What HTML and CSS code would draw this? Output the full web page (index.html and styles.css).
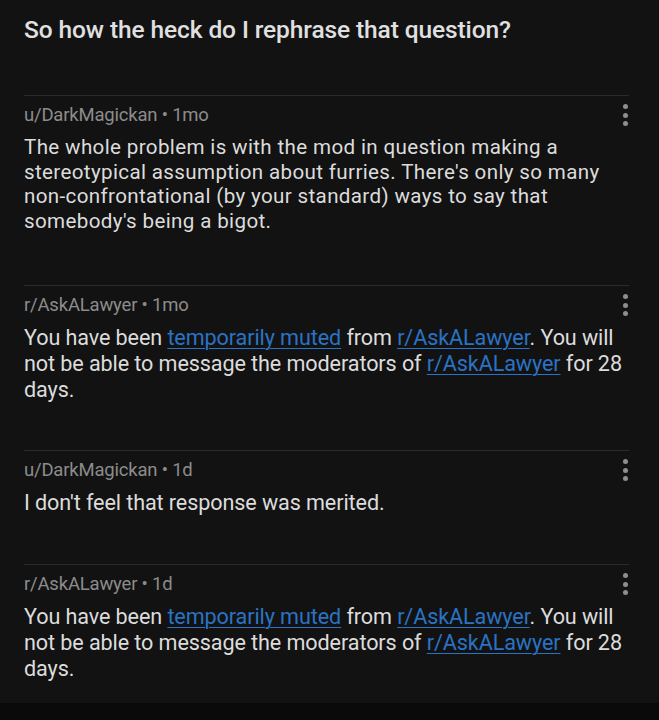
FILE: index.html
```html
<!DOCTYPE html>
<html>
<head>
<meta charset="utf-8">
<link rel="stylesheet" href="styles.css">
</head>
<body>
<div class="page">
  <h1 class="title">So how the heck do I rephrase that question?</h1>
  <div class="comment c1">
    <div class="meta"><span>u/DarkMagickan • 1mo</span><span class="dots"><i></i><i></i><i></i></span></div>
    <p class="body wide">The whole problem is with the mod in question making a stereotypical assumption about furries. There's only so many non&#8209;confrontational (by your standard) ways to say that somebody's being a bigot.</p>
  </div>
  <div class="comment c2">
    <div class="meta"><span>r/AskALawyer • 1mo</span><span class="dots"><i></i><i></i><i></i></span></div>
    <p class="body">You have been <a href="#">temporarily muted</a> from <a href="#">r/AskALawyer</a>. You will not be able to message the moderators of <a href="#">r/AskALawyer</a> for 28 days.</p>
  </div>
  <div class="comment c3">
    <div class="meta"><span>u/DarkMagickan • 1d</span><span class="dots"><i></i><i></i><i></i></span></div>
    <p class="body">I don't feel that response was merited.</p>
  </div>
  <div class="comment c4">
    <div class="meta"><span>r/AskALawyer • 1d</span><span class="dots"><i></i><i></i><i></i></span></div>
    <p class="body">You have been <a href="#">temporarily muted</a> from <a href="#">r/AskALawyer</a>. You will not be able to message the moderators of <a href="#">r/AskALawyer</a> for 28 days.</p>
  </div>
</div>
<div class="navbar"></div>
</body>
</html>
```
FILE: styles.css
```css
html, body {
  margin: 0;
  padding: 0;
  background: #121212;
  height: 720px;
  overflow: hidden;
}
body {
  font-family: Roboto, "Noto Sans", sans-serif;
  color: #d7d7d7;
  display: flex;
  flex-direction: column;
}
.page {
  flex: 1;
  padding: 0 30px 0 24px;
}
.title {
  margin: 0;
  padding-top: 15px;
  height: 95px;
  box-sizing: border-box;
  font-size: 24.5px;
  font-weight: 500;
  line-height: 30px;
  color: #e0e0e0;
  letter-spacing: -0.1px;
}
.comment {
  border-top: 1px solid #2b2b2b;
  padding-top: 7px;
  box-sizing: border-box;
}
.meta {
  display: flex;
  justify-content: space-between;
  align-items: flex-start;
  font-size: 18.5px;
  line-height: 24px;
  color: #8c8c8c;
  letter-spacing: -0.2px;
}
.dots {
  display: flex;
  flex-direction: column;
  gap: 3.5px;
  padding-top: 1px;
  margin-right: 1px;
}
.dots i {
  display: block;
  width: 5px;
  height: 5px;
  border-radius: 50%;
  background: #8e8e8e;
}
.body {
  margin: 8px 0 0;
  font-size: 21.6px;
  line-height: 26px;
  color: #dcdcdc;
  letter-spacing: -0.1px;
}
.body.wide {
  font-size: 20.6px;
  line-height: 24.5px;
  letter-spacing: 0.35px;
}
.body a {
  color: #2a73c4;
  text-decoration: underline;
  text-decoration-thickness: 1px;
  text-underline-offset: 3px;
}
.c1 { height: 190px; }
.c2 { height: 165px; }
.c3 { height: 114px; }
.navbar {
  height: 17px;
  background: #0a0a0a;
}
```
